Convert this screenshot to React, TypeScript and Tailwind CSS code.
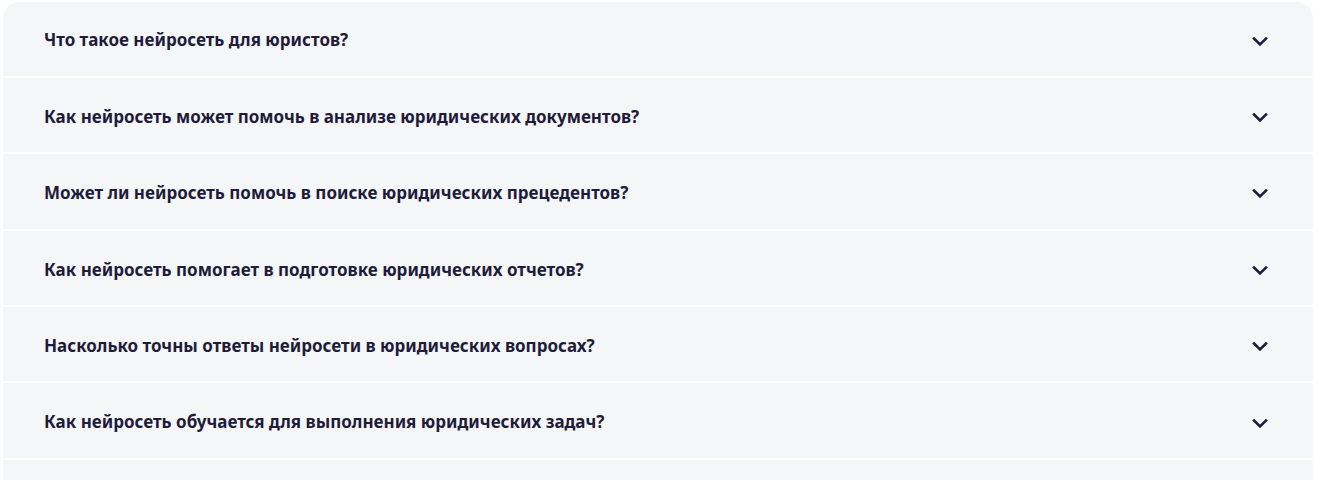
import React from "react";

const questions = [
    "Что такое нейросеть для юристов?",
    "Как нейросеть может помочь в анализе юридических документов?",
    "Может ли нейросеть помочь в поиске юридических прецедентов?",
    "Как нейросеть помогает в подготовке юридических отчетов?",
    "Насколько точны ответы нейросети в юридических вопросах?",
    "Как нейросеть обучается для выполнения юридических задач?",
];

function Chevron() {
    return (
        <svg width="24" height="24" viewBox="0 0 24 24" fill="none" className="shrink-0 mt-[4px]">
            <path d="M6 9.5L12 15.5L18 9.5" stroke="#1e1c3a" strokeWidth="2.6" strokeLinecap="square" />
        </svg>
    );
}

export default function App() {
    return (
        <div className="bg-white h-[480px] overflow-hidden pt-[1.5px] pl-[3px] pr-[21px] font-['Noto_Sans',sans-serif]">
            <div className="flex flex-col gap-[2px] rounded-t-2xl overflow-hidden">
                {questions.map((q) => (
                    <div
                        key={q}
                        className="flex items-center justify-between h-[74.4px] bg-[#f5f6f8] pl-[41px] pr-[41px]"
                    >
                        <span className="text-[17px] font-bold text-[#1e1c3a] mt-[3px]">{q}</span>
                        <Chevron />
                    </div>
                ))}
                <div className="h-[74px] bg-[#f5f6f8]" />
            </div>
        </div>
    );
}
